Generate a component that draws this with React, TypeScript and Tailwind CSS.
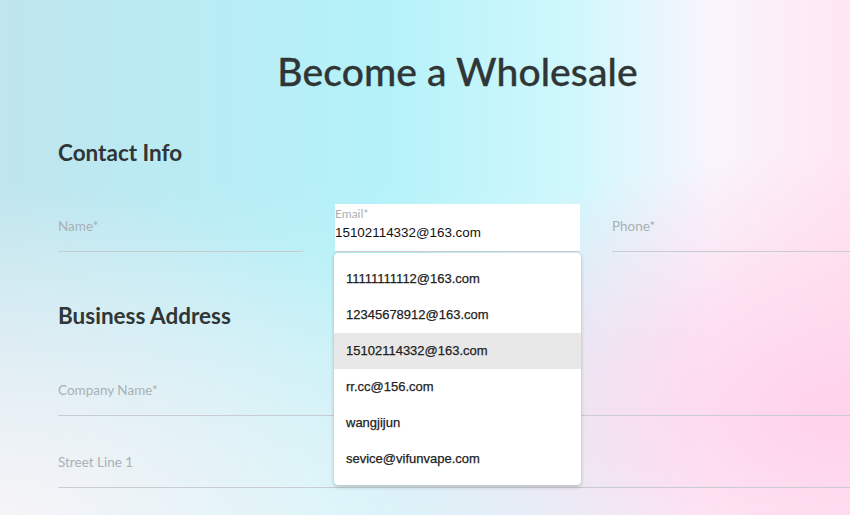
const emails = [
  "11111111112@163.com",
  "12345678912@163.com",
  "15102114332@163.com",
  "rr.cc@156.com",
  "wangjijun",
  "sevice@vifunvape.com",
];

const heading = "font-['Lato','Open_Sans',sans-serif]";

function Field({ label, className = "" }: { label: string; className?: string }) {
  return (
    <div className={`h-[48px] border-b border-[#c9cdd1] ${className}`}>
      <div className={`pt-[14px] text-[13.5px] leading-[16px] text-[#a9b1b4] ${heading}`}>{label}</div>
    </div>
  );
}

export default function App() {
  return (
    <div className="relative h-[515px] w-[850px] overflow-hidden bg-[radial-gradient(ellipse_at_100%_80%,#ffd2ea_0%,rgba(255,210,234,0.6)_20%,rgba(255,210,234,0)_45%),linear-gradient(to_bottom,rgba(255,255,255,0)_0%,rgba(255,255,255,0)_35%,rgba(255,255,255,0.35)_100%),radial-gradient(ellipse_at_0%_100%,#f1eff4_0%,rgba(241,239,244,0)_45%),linear-gradient(to_right,#bfe5ee_0%,#b4f2f9_45%,#d0f8fc_68%,#f9f5fd_84%,#ffe6f3_100%)]">
      <div className="ml-[58px] w-[799px]">
        <h1 className={`mt-[48px] text-center text-[39px] font-medium leading-[46px] tracking-[0.1px] text-[#303536] [-webkit-text-stroke:0.3px_#303536] ${heading}`}>
          Become a Wholesale
        </h1>

        <h2 className={`mt-[45px] text-[22.5px] font-bold leading-[28px] text-[#303536] ${heading}`}>Contact Info</h2>

        <div className="mt-[37px] grid grid-cols-3 gap-[32px]">
          <Field label="Name*" />
          <div className="h-[48px] border-b border-[#c9cdd1] bg-white">
            <div className={`pt-[3px] text-[12px] leading-[14px] text-[#a9b1b4] ${heading}`}>Email*</div>
            <div className="mt-[2px] font-['Liberation_Sans',Arial,sans-serif] text-[13.4px] leading-[20px] text-[#111]">
              15102114332@163.com
            </div>
          </div>
          <Field label="Phone*" />
        </div>

        <h2 className={`mt-[50px] text-[22.5px] font-bold leading-[28px] text-[#303536] ${heading}`}>Business Address</h2>

        <Field label="Company Name*" className="mt-[38px]" />
        <Field label="Street Line 1" className="mt-[24px]" />
      </div>

      <ul className="absolute left-[334px] top-[253px] w-[247px] rounded-[4px] bg-white py-[8px] shadow-[0_2px_4px_rgba(0,0,0,0.2),0_0_1px_rgba(0,0,0,0.15)]">
        {emails.map((email, i) => (
          <li
            key={email}
            className={`h-[36px] px-[12px] font-['Liberation_Sans',Arial,sans-serif] text-[13px] leading-[36px] text-[#222] [-webkit-text-stroke:0.25px_#222] ${
              i === 2 ? "bg-[#e8e8e8]" : ""
            }`}
          >
            {email}
          </li>
        ))}
      </ul>
    </div>
  );
}
